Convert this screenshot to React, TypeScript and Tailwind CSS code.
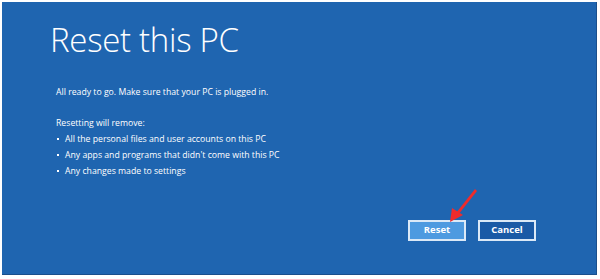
const items = [
  "All the personal files and user accounts on this PC",
  "Any apps and programs that didn't come with this PC",
  "Any changes made to settings",
];

export default function App() {
  return (
    <div className="w-[600px] h-[279px] bg-white p-[2px] pr-[3px] pb-[4px]">
      <div
        className="w-full h-full bg-[#1f65b0] border-r border-b border-[#1a4f8c] flex flex-col text-white"
        style={{ fontFamily: '"Open Sans", "Noto Sans", sans-serif' }}
      >
        <h1 className="ml-[48px] mt-[18px] text-[33px] leading-[40px] font-light tracking-[-0.3px]">Reset this PC</h1>

        <p className="ml-[54px] mt-[26px] text-[8.7px] leading-[12px]">All ready to go. Make sure that your PC is plugged in.</p>

        <p className="ml-[54px] mt-[19px] text-[8.7px] leading-[12px]">Resetting will remove:</p>
        <ul className="ml-[55px] mt-[4px] flex flex-col gap-[4px] text-[8.7px] leading-[12px]">
          {items.map(t => (
            <li key={t} className="flex items-center">
              <span className="w-[2px] h-[2px] bg-white mr-[6px]" />
              {t}
            </li>
          ))}
        </ul>

        <div className="mt-auto mb-[33px] mr-[60px] flex items-start justify-end gap-[12px]">
          <div className="relative flex">
            <button className="w-[58px] h-[21px] border-2 border-[#dbe9f7] bg-[#4d9ae0] text-[9.5px] font-bold">Reset</button>
            <svg className="absolute left-[38px] top-[-33px]" width="34" height="36" viewBox="0 0 34 36">
              <polygon points="29,2 31,4 12,28 10,26" fill="#f02b2b" />
              <polygon points="4,35 6,21 17,28" fill="#f02b2b" />
            </svg>
          </div>
          <button className="w-[58px] h-[21px] border-2 border-[#dbe9f7] bg-[#1a5aa6] text-[9.5px] font-bold">Cancel</button>
        </div>
      </div>
    </div>
  );
}
